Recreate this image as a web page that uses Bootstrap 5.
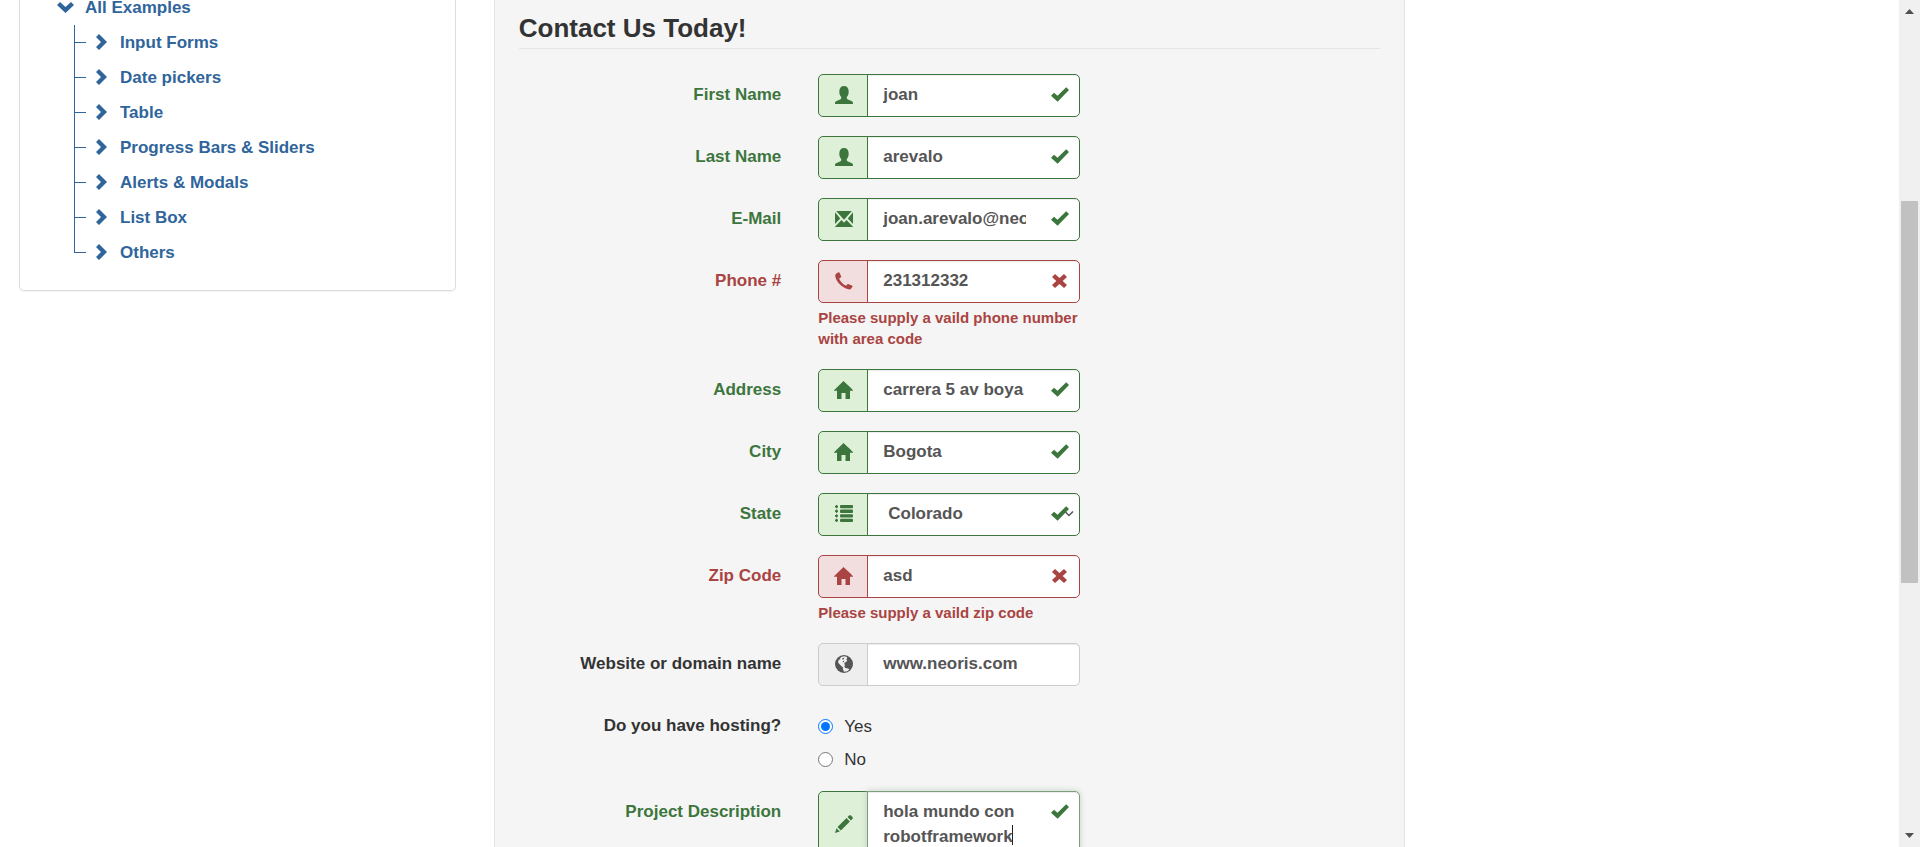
<!DOCTYPE html>
<html lang="en">
<head>
<meta charset="utf-8">
<meta name="viewport" content="width=device-width, initial-scale=1">
<title>Contact Us Today!</title>
<link rel="stylesheet" href="https://cdn.jsdelivr.net/npm/bootstrap@5.3.0/dist/css/bootstrap.min.css">
<style>
  body { font-family: "Liberation Sans", Arial, sans-serif; font-size: 17px; line-height: 25px; color: #333; background: #fff; }
  .row { --bs-gutter-x: 38px; }
  .page-area { padding: 0 19px; min-width: 0; }

  /* sidebar tree */
  .side-panel { border: 1px solid #ddd; border-top: 0; border-radius: 0 0 5px 5px; box-shadow: 0 1px 1px rgba(0,0,0,.05); padding: 0 18px 20px 37px; }
  .side-panel a { color: #2f659b; font-weight: 700; text-decoration: none; }
  .side-panel svg { margin-bottom: 2px; }
  .tree-root { line-height: 16px; gap: 11px; }
  .tree-list { margin: 9px 0 0 17px; }
  .tree-list li { position: relative; height: 35px; padding-left: 22px; }
  .tree-list li::before { content: ""; position: absolute; left: 0; top: 0; width: 1px; height: 100%; background: #2f659b; }
  .tree-list li::after { content: ""; position: absolute; left: 0; top: 17px; width: 12px; height: 1px; background: #2f659b; }
  .tree-list li:last-child::before { height: 50%; }
  .tree-list a { gap: 13px; }

  /* form well */
  .form-well { background: #f5f5f5; border: 1px solid #e3e3e3; border-width: 0 1px; padding: 10px 24px 0; }
  .form-well legend { float: none; font-size: 26px; line-height: 36px; font-weight: 700; border-bottom: 1px solid #e5e5e5; padding-bottom: 2px; margin-bottom: 25px; }
  .field-row { --bs-gutter-x: 37px; --tone: #333; --edge: #ccc; --tint: #eee; --mark: #555; margin-bottom: 19px; }
  .is-good { --tone: #3c763d; --edge: #3c763d; --tint: #dff0d8; --mark: #3c763d; }
  .is-bad { --tone: #a94442; --edge: #a94442; --tint: #f2dede; --mark: #a94442; }
  .field-label { padding-top: 8px; font-weight: 700; color: var(--tone); }
  .field-row .input-group { width: auto; margin-right: 1px; }
  .addon { width: 51px; margin-right: -1px; justify-content: center; padding: 0 0 2px; background: var(--tint); border: 1px solid var(--edge); border-radius: 5px; color: var(--mark); }
  .entry { height: 43px; padding: 6px 53px 8px 15px; font-size: 17px; line-height: 25px; font-weight: 700; color: #555; background: #fff; border: 1px solid var(--edge); border-radius: 0 5px 5px 0 !important; box-shadow: inset 0 1px 1px rgba(0,0,0,.075); }
  .entry:focus { border-color: var(--edge); color: #555; box-shadow: inset 0 1px 1px rgba(0,0,0,.075); }
  select.entry { padding-left: 20px; background: #fff; }
  textarea.entry, textarea.entry:focus { height: 67px; padding-top: 7px; border-color: #7d9f7e; box-shadow: inset 0 1px 1px rgba(0,0,0,.075), 0 0 6px #c3cfc3; caret-color: transparent; }
  .feedback { position: absolute; top: 0; right: 0; width: 40px; height: 41px; color: var(--mark); z-index: 6; pointer-events: none; }
  .select-arrow { position: absolute; right: 6px; top: 17px; color: #555; z-index: 5; pointer-events: none; }
  .text-caret { position: absolute; left: 195px; top: 34px; width: 1px; height: 20px; background: #222; z-index: 6; }
  .help-note { font-size: 15px; line-height: 21px; font-weight: 700; color: var(--tone); margin: 4px 0 1px; }
  .choice { padding-top: 9px; gap: 11px; }
  .choice + .choice { padding-top: 8px; }
  .choice input { width: 15px; height: 15px; margin: 0; }
  svg { fill: currentColor; display: block; flex: none; }

  /* window scroll bar */
  .scroll-track { width: 21px; background: #f0f0f0; color: #505050; padding: 9px 2px; }
  .scroll-thumb { background: #c1c1c1; flex: 382 0 0; }
  .scroll-before { flex: 187 0 0; }
  .scroll-after { flex: 250 0 0; }
</style>
</head>
<body class="vh-100 d-flex overflow-hidden">
<svg class="d-none" aria-hidden="true">
  <symbol id="i-right" viewBox="0 0 11 16"><path d="M3 0 11 8 3 16 0 13 5 8 0 3Z"/></symbol>
  <symbol id="i-down" viewBox="0 0 17 11"><path d="M0 3 3 0 8.500 5 14 0 17 3 8.500 11Z"/></symbol>
  <symbol id="i-user" viewBox="0 0 18 18"><path d="M9 0C12 0 13.700 2 13.700 5.500 13.700 8 13 10 11.800 11V12.300C11.800 13 12.500 13.300 13.500 13.800L17 15.300C17.900 15.800 18 16.500 18 18H0C0 16.500.100 15.800 1 15.300L4.500 13.800C5.500 13.300 6.200 13 6.200 12.300V11C5 10 4.300 8 4.300 5.500 4.300 2 6 0 9 0Z"/></symbol>
  <symbol id="i-mail" viewBox="0 0 18 16"><path d="M1.200 0H16.800L9 8.800ZM0 1.200 5.200 7.400 0 12.900ZM18 1.200 12.800 7.400 18 12.900ZM0 15.800 6.500 8.900 9 11.700 11.500 8.900 18 15.800V16H0Z"/></symbol>
  <symbol id="i-phone" viewBox="0 0 18 18"><path d="M1 1.700 3 .400C3.700 0 4.200.100 4.600.800L6 3.900C6.300 4.700 6.200 5.200 5.600 5.600L4.100 6.600C5.200 9.600 8 12.500 11 13.700L12.200 12.500C12.700 12 13 11.900 13.700 12.200L16.900 13.500C17.600 13.900 17.700 14.400 17.300 15L15.800 17C15 17.600 14 17.600 12.500 17.100 6.500 15 2 10.500.400 5 .100 3.600.200 2.700 1 1.700Z"/></symbol>
  <symbol id="i-home" viewBox="0 0 19 18"><path d="M9.500 0 14 4.200 16 6 19 9.200V9.700H16V18H11.500V12H7.500V18H3V9.700H0V9.200Z"/></symbol>
  <symbol id="i-list" viewBox="0 0 18 17"><path d="M1 0H2.200V.700H3V2.500H2.200V3.300H1V2.500H0V.700H1ZM1 4.600H2.200V5.300H3V7.100H2.200V7.900H1V7.100H0V5.300H1ZM1 9.200H2.200V9.900H3V11.700H2.200V12.500H1V11.700H0V9.900H1ZM1 13.700H2.200V14.400H3V16.200H2.200V17H1V16.200H0V14.400H1Z"/><rect x="5" width="13" height="3.300" rx="1"/><rect x="5" y="4.600" width="13" height="3.300" rx="1"/><rect x="5" y="9.200" width="13" height="3.300" rx="1"/><rect x="5" y="13.700" width="13" height="3.300" rx="1"/></symbol>
  <symbol id="i-globe" viewBox="0 0 18 18"><circle cx="9" cy="9" r="9"/><path fill="#eee" d="M6 1.900 9 1.200 11.500 1.700 12.300 2.900 11.300 4.300 12.200 5.400 11.200 7 9.800 7.600 9.200 9.200 10.300 10 9.200 11.200 10.300 13 13 13.400 14.400 14.600 12.300 16.200 9 16.800 8 14.200 7.900 12.300 5.500 10.300 3 7.600 3.500 5.200 4.600 4.600Z"/><path d="M7.500 3 9.300 2.700 8.700 4.200 7.300 4.700ZM8 6 9.300 5.800 8.900 7 7.800 7.200Z"/></symbol>
  <symbol id="i-pencil" viewBox="0 0 18 18"><path d="M0 18 1.500 13.200 4.800 16.500ZM2.500 12.100 11.500 3.100 14.900 6.500 5.900 15.500ZM12.500 2.100 14 .600C14.700 0 15.400 0 16 .600L17.400 2C18 2.600 18 3.300 17.400 4L15.900 5.500Z"/></symbol>
  <symbol id="i-ok" viewBox="0 0 18 15"><path d="M0 8.700 3 5.800 6.500 8.800 15.200.200 18 3 6.600 14.700Z"/></symbol>
  <symbol id="i-remove" viewBox="0 0 15 14"><path d="M3 0 7.500 3.900 12 0 15 2.900 10.700 7 15 11.100 12 14 7.500 10.100 3 14 0 11.100 4.300 7 0 2.900Z"/></symbol>
</svg>

<div class="page-area flex-grow-1">
  <div class="row flex-nowrap">
    <aside class="col-3">
      <nav class="side-panel" aria-label="Examples">
        <a href="#" class="tree-root d-flex align-items-center"><svg width="17" height="11"><use href="#i-down"/></svg>All Examples</a>
        <ul class="tree-list list-unstyled mb-0">
          <li class="d-flex align-items-center"><a href="#" class="d-flex align-items-center"><svg width="11" height="16"><use href="#i-right"/></svg>Input Forms</a></li>
          <li class="d-flex align-items-center"><a href="#" class="d-flex align-items-center"><svg width="11" height="16"><use href="#i-right"/></svg>Date pickers</a></li>
          <li class="d-flex align-items-center"><a href="#" class="d-flex align-items-center"><svg width="11" height="16"><use href="#i-right"/></svg>Table</a></li>
          <li class="d-flex align-items-center"><a href="#" class="d-flex align-items-center"><svg width="11" height="16"><use href="#i-right"/></svg>Progress Bars &amp; Sliders</a></li>
          <li class="d-flex align-items-center"><a href="#" class="d-flex align-items-center"><svg width="11" height="16"><use href="#i-right"/></svg>Alerts &amp; Modals</a></li>
          <li class="d-flex align-items-center"><a href="#" class="d-flex align-items-center"><svg width="11" height="16"><use href="#i-right"/></svg>List Box</a></li>
          <li class="d-flex align-items-center"><a href="#" class="d-flex align-items-center"><svg width="11" height="16"><use href="#i-right"/></svg>Others</a></li>
        </ul>
      </nav>
    </aside>

    <main class="col-6">
      <form class="form-well">
        <fieldset>
          <legend>Contact Us Today!</legend>

          <div class="row field-row is-good">
            <label class="col-4 text-end field-label" for="first">First Name</label>
            <div class="col-4">
              <div class="input-group">
                <span class="input-group-text addon"><svg width="18" height="18"><use href="#i-user"/></svg></span>
                <input class="form-control entry" id="first" type="text" value="joan">
                <span class="feedback d-flex align-items-center justify-content-center"><svg width="18" height="15"><use href="#i-ok"/></svg></span>
              </div>
            </div>
          </div>

          <div class="row field-row is-good">
            <label class="col-4 text-end field-label" for="last">Last Name</label>
            <div class="col-4">
              <div class="input-group">
                <span class="input-group-text addon"><svg width="18" height="18"><use href="#i-user"/></svg></span>
                <input class="form-control entry" id="last" type="text" value="arevalo">
                <span class="feedback d-flex align-items-center justify-content-center"><svg width="18" height="15"><use href="#i-ok"/></svg></span>
              </div>
            </div>
          </div>

          <div class="row field-row is-good">
            <label class="col-4 text-end field-label" for="email">E-Mail</label>
            <div class="col-4">
              <div class="input-group">
                <span class="input-group-text addon"><svg width="18" height="16"><use href="#i-mail"/></svg></span>
                <input class="form-control entry" id="email" type="text" value="joan.arevalo@neoris.com">
                <span class="feedback d-flex align-items-center justify-content-center"><svg width="18" height="15"><use href="#i-ok"/></svg></span>
              </div>
            </div>
          </div>

          <div class="row field-row is-bad">
            <label class="col-4 text-end field-label" for="phone">Phone #</label>
            <div class="col-4">
              <div class="input-group">
                <span class="input-group-text addon"><svg width="18" height="18"><use href="#i-phone"/></svg></span>
                <input class="form-control entry" id="phone" type="text" value="231312332" aria-describedby="phone-note">
                <span class="feedback d-flex align-items-center justify-content-center"><svg width="15" height="14"><use href="#i-remove"/></svg></span>
              </div>
              <p class="help-note" id="phone-note">Please supply a vaild phone number with area code</p>
            </div>
          </div>

          <div class="row field-row is-good">
            <label class="col-4 text-end field-label" for="address">Address</label>
            <div class="col-4">
              <div class="input-group">
                <span class="input-group-text addon"><svg width="19" height="18"><use href="#i-home"/></svg></span>
                <input class="form-control entry" id="address" type="text" value="carrera 5 av boya">
                <span class="feedback d-flex align-items-center justify-content-center"><svg width="18" height="15"><use href="#i-ok"/></svg></span>
              </div>
            </div>
          </div>

          <div class="row field-row is-good">
            <label class="col-4 text-end field-label" for="city">City</label>
            <div class="col-4">
              <div class="input-group">
                <span class="input-group-text addon"><svg width="19" height="18"><use href="#i-home"/></svg></span>
                <input class="form-control entry" id="city" type="text" value="Bogota">
                <span class="feedback d-flex align-items-center justify-content-center"><svg width="18" height="15"><use href="#i-ok"/></svg></span>
              </div>
            </div>
          </div>

          <div class="row field-row is-good">
            <label class="col-4 text-end field-label" for="state">State</label>
            <div class="col-4">
              <div class="input-group">
                <span class="input-group-text addon"><svg width="18" height="17"><use href="#i-list"/></svg></span>
                <select class="form-control entry" id="state"><option selected>Colorado</option></select>
                <svg class="select-arrow" width="10" height="8" viewBox="0 0 10 8"><path d="M1 1.500 5 5.500 9 1.500" fill="none" stroke="currentColor" stroke-width="1.500"/></svg>
                <span class="feedback d-flex align-items-center justify-content-center"><svg width="18" height="15"><use href="#i-ok"/></svg></span>
              </div>
            </div>
          </div>

          <div class="row field-row is-bad">
            <label class="col-4 text-end field-label" for="zip">Zip Code</label>
            <div class="col-4">
              <div class="input-group">
                <span class="input-group-text addon"><svg width="19" height="18"><use href="#i-home"/></svg></span>
                <input class="form-control entry" id="zip" type="text" value="asd" aria-describedby="zip-note">
                <span class="feedback d-flex align-items-center justify-content-center"><svg width="15" height="14"><use href="#i-remove"/></svg></span>
              </div>
              <p class="help-note" id="zip-note">Please supply a vaild zip code</p>
            </div>
          </div>

          <div class="row field-row">
            <label class="col-4 text-end field-label" for="site">Website or domain name</label>
            <div class="col-4">
              <div class="input-group">
                <span class="input-group-text addon"><svg width="18" height="18"><use href="#i-globe"/></svg></span>
                <input class="form-control entry" id="site" type="text" value="www.neoris.com">
              </div>
            </div>
          </div>

          <div class="row field-row" role="radiogroup" aria-labelledby="hosting-label">
            <span class="col-4 text-end field-label" id="hosting-label">Do you have hosting?</span>
            <div class="col-4">
              <label class="choice d-flex align-items-center"><input type="radio" name="hosting" value="yes" checked>Yes</label>
              <label class="choice d-flex align-items-center"><input type="radio" name="hosting" value="no">No</label>
            </div>
          </div>

          <div class="row field-row is-good">
            <label class="col-4 text-end field-label" for="project">Project Description</label>
            <div class="col-4">
              <div class="input-group">
                <span class="input-group-text addon"><svg width="18" height="18"><use href="#i-pencil"/></svg></span>
                <textarea class="form-control entry" id="project" rows="2">hola mundo con robotframework</textarea>
                <span class="feedback d-flex align-items-center justify-content-center"><svg width="18" height="15"><use href="#i-ok"/></svg></span>
                <span class="text-caret" aria-hidden="true"></span>
              </div>
            </div>
          </div>
        </fieldset>
      </form>
    </main>
  </div>
</div>

<div class="scroll-track d-flex flex-column flex-shrink-0" aria-hidden="true">
  <svg class="align-self-center" width="9" height="5" viewBox="0 0 9 5"><path d="M4.500 0 9 5H0Z"/></svg>
  <div class="scroll-before"></div>
  <div class="scroll-thumb"></div>
  <div class="scroll-after"></div>
  <svg class="align-self-center" width="9" height="5" viewBox="0 0 9 5"><path d="M0 0H9L4.500 5Z"/></svg>
</div>
<script src="https://cdn.jsdelivr.net/npm/bootstrap@5.3.0/dist/js/bootstrap.bundle.min.js"></script>
</body>
</html>
